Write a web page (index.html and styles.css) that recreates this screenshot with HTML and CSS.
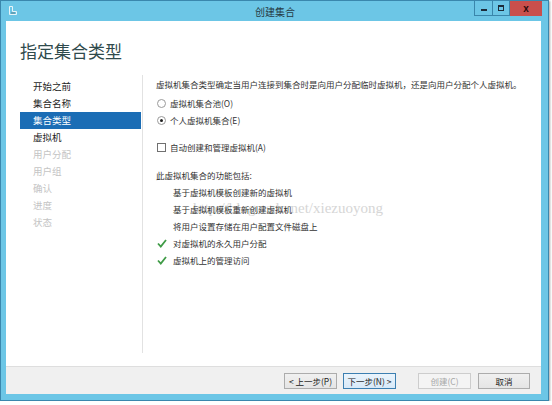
FILE: index.html
```html
<!DOCTYPE html>
<html lang="zh-CN">
<head>
  <meta charset="UTF-8" />
  <title>创建集合</title>
  <link rel="stylesheet" href="styles.css">
</head>
<body>
  <div class="window">
    <div class="titlebar">
      <svg class="app-icon" width="10" height="11" viewBox="0 0 10 11">
        <path d="M1.5 1.5h3v5h4v3h-7z" fill="none" stroke="#e8f4f8" stroke-width="1" />
        <path d="M3 8h4" stroke="#5a7f8c" stroke-width="1" />
      </svg>
      <div class="title">创建集合</div>
      <div class="controls">
        <span class="ctrl min"><i></i></span>
        <span class="ctrl max"><i></i></span>
        <span class="ctrl close">x</span>
      </div>
    </div>

    <div class="client">
      <div class="header">
        <h1>指定集合类型</h1>
      </div>

      <div class="main">
        <ul class="steps">
          <li>开始之前</li>
          <li>集合名称</li>
          <li class="active">集合类型</li>
          <li>虚拟机</li>
          <li class="disabled">用户分配</li>
          <li class="disabled">用户组</li>
          <li class="disabled">确认</li>
          <li class="disabled">进度</li>
          <li class="disabled">状态</li>
        </ul>

        <div class="content">
          <div class="watermark">http://blog.csdn.net/xiezuoyong</div>

          <p class="desc">虚拟机集合类型确定当用户连接到集合时是向用户分配临时虚拟机，还是向用户分配个人虚拟机。</p>

          <div class="options">
            <label class="row"><span class="radio"></span>虚拟机集合池(O)</label>
            <label class="row"><span class="radio checked"></span>个人虚拟机集合(E)</label>
          </div>

          <label class="row auto"><span class="checkbox"></span>自动创建和管理虚拟机(A)</label>

          <p class="features-title">此虚拟机集合的功能包括:</p>
          <ul class="features">
            <li><span class="mark"></span>基于虚拟机模板创建新的虚拟机</li>
            <li><span class="mark"></span>基于虚拟机模板重新创建虚拟机</li>
            <li><span class="mark"></span>将用户设置存储在用户配置文件磁盘上</li>
            <li>
              <span class="mark">
                <svg width="10" height="9" viewBox="0 0 10 9"><path d="M1 4.5l2.8 3L9 1" fill="none" stroke="#3f9b46" stroke-width="1.8" /></svg>
              </span>对虚拟机的永久用户分配
            </li>
            <li>
              <span class="mark">
                <svg width="10" height="9" viewBox="0 0 10 9"><path d="M1 4.5l2.8 3L9 1" fill="none" stroke="#3f9b46" stroke-width="1.8" /></svg>
              </span>虚拟机上的管理访问
            </li>
          </ul>
        </div>
      </div>

      <div class="footer">
        <button class="btn">&lt; 上一步(P)</button>
        <button class="btn primary">下一步(N) &gt;</button>
        <button class="btn disabled">创建(C)</button>
        <button class="btn cancel">取消</button>
      </div>
    </div>
  </div>
</body>
</html>
```

FILE: styles.css
```css
body {
  margin: 0;
  background-color: #fff;
  font-family: "Noto Sans CJK SC", "Liberation Sans", sans-serif;
  color: #333;
}

.window {
  width: 549px;
  height: 401px;
  box-sizing: border-box;
  border: 1px solid #3a87ad;
  background-color: #6cc6e6;
  display: flex;
  flex-direction: column;
  box-shadow: 1px 1px 2px rgba(0, 0, 0, 0.35);
}

/* title bar */
.titlebar {
  height: 20px;
  flex: none;
  display: grid;
  grid-template-columns: 1fr auto 1fr;
  align-items: start;
  padding: 0 6px 0 7px;
}

.app-icon {
  margin-top: 4px;
}

.title {
  font-size: 10px;
  line-height: 21px;
  color: #263a44;
}

.controls {
  justify-self: end;
  display: flex;
}

.ctrl {
  height: 15px;
  box-sizing: border-box;
  border: 1px solid #3a86ab;
  border-top: none;
  display: flex;
  align-items: center;
  justify-content: center;
}

.min {
  width: 19px;
}

.min i {
  width: 6px;
  height: 2px;
  margin-top: 4px;
  background-color: #1d2c3a;
}

.max {
  width: 17px;
  border-left: none;
}

.max i {
  width: 4px;
  height: 3px;
  border: 1px solid #1d2c3a;
  border-top-width: 2px;
}

.close {
  width: 32px;
  border: none;
  background-color: #c94f4c;
  color: #2a0a0a;
  font-family: "Liberation Sans", sans-serif;
  font-weight: bold;
  font-size: 10px;
  line-height: 1;
}

/* client area */
.client {
  flex: 1;
  margin: 0 7px 6px 5px;
  background-color: #fff;
  display: flex;
  flex-direction: column;
}

.header {
  height: 49px;
  flex: none;
}

.header h1 {
  margin: 0;
  padding: 19px 0 0 14px;
  font-size: 17px;
  line-height: 22px;
  font-weight: normal;
  color: #2f4a4c;
}

.main {
  flex: 1;
  display: flex;
}

.steps {
  list-style: none;
  width: 137px;
  box-sizing: border-box;
  margin: 5px 0 13px 0;
  padding: 3px 0 0 14px;
  border-right: 1px solid #e2e2e2;
  flex: none;
}

.steps li {
  width: 121px;
  box-sizing: border-box;
  height: 17px;
  line-height: 17px;
  padding-left: 13px;
  font-size: 9.5px;
  color: #1e1e1e;
}

.steps li.active {
  background-color: #1b6db5;
  color: #fff;
}

.steps li.disabled {
  color: #c4c4c4;
}

.content {
  position: relative;
  flex: 1;
  padding: 6px 0 0 13px;
  font-size: 8.5px;
  line-height: 17px;
}

.watermark {
  position: absolute;
  left: 50px;
  top: 129px;
  font-family: "Liberation Serif", serif;
  font-size: 15px;
  line-height: 18px;
  color: #d6d6d6;
  white-space: nowrap;
}

.content p {
  position: relative;
  margin: 0;
}

.desc {
  white-space: nowrap;
}

.options {
  margin-top: 2px;
}

.row {
  position: relative;
  display: flex;
  align-items: center;
  height: 17px;
  padding-left: 1px;
}

.radio {
  width: 9px;
  height: 9px;
  box-sizing: border-box;
  border: 1px solid #9a9a9a;
  border-radius: 50%;
  margin-right: 4px;
  display: flex;
  align-items: center;
  justify-content: center;
}

.radio.checked::after {
  content: '';
  width: 3px;
  height: 3px;
  border-radius: 50%;
  background-color: #1e1e1e;
}

.checkbox {
  width: 9px;
  height: 9px;
  box-sizing: border-box;
  border: 1px solid #707070;
  margin-right: 4px;
}

.auto {
  margin-top: 10px;
}

.features-title {
  margin-top: 11px !important;
}

.features {
  position: relative;
  list-style: none;
  margin: 0;
  padding: 0;
}

.features li {
  display: flex;
  align-items: center;
  height: 17px;
}

.mark {
  width: 17px;
  flex: none;
  display: flex;
  align-items: center;
  padding-left: 1px;
  box-sizing: border-box;
}

/* footer buttons */
.footer {
  height: 28px;
  flex: none;
  box-sizing: border-box;
  border-top: 1px solid #dedede;
  background-color: #f0f0f0;
  display: flex;
  align-items: center;
  justify-content: flex-end;
  padding-right: 11px;
}

.btn {
  width: 53px;
  height: 16px;
  padding: 0;
  margin-left: 6px;
  font-family: inherit;
  font-size: 8.5px;
  line-height: 14px;
  color: #222;
  border: 1px solid #acacac;
  background: linear-gradient(#f0f0f0, #e5e5e5);
}

.btn.primary {
  border-color: #3c7fb1;
  background: linear-gradient(#eaf4fc, #d8e9f8);
}

.btn.disabled {
  margin-left: 22px;
  color: #a6a6a6;
  border-color: #cdcdcd;
  background: #f4f4f4;
}

.btn.cancel {
  width: 52px;
  margin-left: 7px;
}
```
